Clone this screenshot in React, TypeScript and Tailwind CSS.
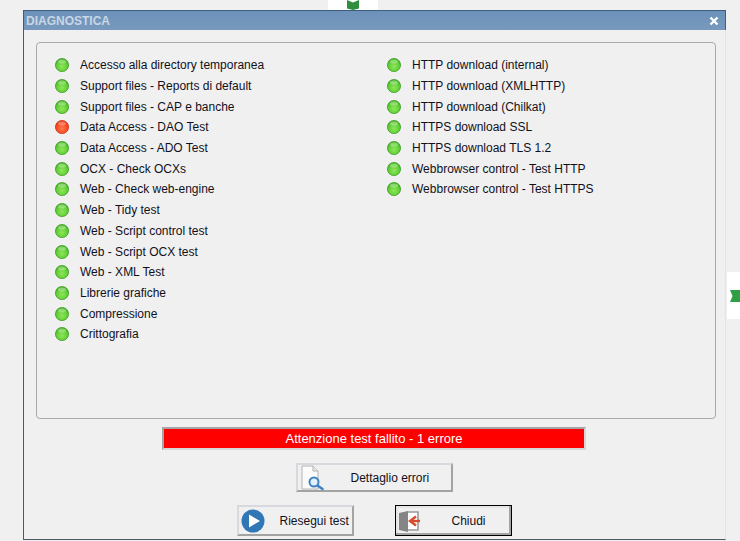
const left: [string, boolean?][] = [
  ["Accesso alla directory temporanea"],
  ["Support files - Reports di default"],
  ["Support files - CAP e banche"],
  ["Data Access - DAO Test", true],
  ["Data Access - ADO Test"],
  ["OCX - Check OCXs"],
  ["Web - Check web-engine"],
  ["Web - Tidy test"],
  ["Web - Script control test"],
  ["Web - Script OCX test"],
  ["Web - XML Test"],
  ["Librerie grafiche"],
  ["Compressione"],
  ["Crittografia"],
];
const right: [string, boolean?][] = [
  ["HTTP download (internal)"],
  ["HTTP download (XMLHTTP)"],
  ["HTTP download (Chilkat)"],
  ["HTTPS download SSL"],
  ["HTTPS download TLS 1.2"],
  ["Webbrowser control - Test HTTP"],
  ["Webbrowser control - Test HTTPS"],
];

function Led({ red }: { red?: boolean }) {
  const id = red ? "ledr" : "ledg";
  return (
    <svg width="14" height="14" viewBox="0 0 14 14" className="shrink-0">
      <defs>
        <radialGradient id={id} cx="50%" cy="62%" r="60%">
          <stop offset="0%" stopColor={red ? "#ff7a50" : "#8fe65a"} />
          <stop offset="65%" stopColor={red ? "#fb4a22" : "#62cf38"} />
          <stop offset="100%" stopColor={red ? "#e83010" : "#3fae1f"} />
        </radialGradient>
      </defs>
      <circle cx="7" cy="7" r="6.6" fill={`url(#${id})`} stroke={red ? "#c92a10" : "#3a9a1e"} strokeWidth="0.7" />
      <ellipse cx="7" cy="3.6" rx="4" ry="2" fill="#ffffff" opacity="0.3" />
    </svg>
  );
}

function Column({ items, className }: { items: [string, boolean?][]; className: string }) {
  return (
    <div className={className}>
      {items.map(([label, red]) => (
        <div key={label} className="h-[20.7px] flex items-center gap-[11px]">
          <Led red={red} />
          <span className="text-[12px] leading-none text-[#10101c] whitespace-nowrap">{label}</span>
        </div>
      ))}
    </div>
  );
}

function Btn({ icon, label, className, textClass }: { icon: React.ReactNode; label: string; className: string; textClass: string }) {
  return (
    <button className={`relative flex items-center bg-[#f0f0f0] text-[12px] text-[#10101c] ${className}`}>
      {icon}
      <span className={textClass}>{label}</span>
    </button>
  );
}

const SearchDoc = (
  <svg width="24" height="26" viewBox="0 0 24 26" className="ml-[3px] shrink-0">
    <path d="M1 1h11l5 5v18H1z" fill="#fbfbfb" stroke="#b4b4b4" />
    <path d="M12 1v5h5" fill="#e8e8e8" stroke="#b4b4b4" />
    <circle cx="13" cy="17" r="4.5" fill="#e6f0f8" stroke="#3f83c4" strokeWidth="2" />
    <path d="M16.5 20.5l5 3.5" stroke="#3f83c4" strokeWidth="2.6" strokeLinecap="round" />
  </svg>
);

const Play = (
  <svg width="24" height="24" viewBox="0 0 24 24" className="ml-[2px] shrink-0">
    <circle cx="12" cy="12" r="11.5" fill="#3277b5" />
    <path d="M8 5.5L19 12 8 18.5z" fill="#ffffff" />
  </svg>
);

const Exit = (
  <svg width="24" height="24" viewBox="0 0 24 24" className="ml-[2px] shrink-0">
    <path d="M9 3h11v18H9" fill="#ffffff" stroke="#9a9a9a" strokeWidth="1.6" />
    <path d="M1 4l9-2v21l-9-2z" fill="#858585" />
    <path d="M13 12h9" stroke="#d9492f" strokeWidth="2.4" />
    <path d="M18 7.5L12 12l6 4.5" fill="none" stroke="#d9492f" strokeWidth="2.4" />
  </svg>
);

function Notch({ rotate }: { rotate: boolean }) {
  return (
    <svg width="12" height="10" viewBox="0 0 12 10" className={rotate ? "rotate-[-90deg]" : ""}>
      <path d="M0 0l3 1.500 3 1.500 3-1.500 3-1.500v10H0z" fill="#2f9e44" transform={rotate ? "" : "rotate(180 6 5)"} />
    </svg>
  );
}

export default function App() {
  return (
    <div className="relative w-[740px] h-[541px] overflow-hidden bg-[#f0f0f0] font-['Tahoma','Liberation_Sans',sans-serif]">
      <div className="absolute left-[328px] top-0 w-[50px] h-[10px] bg-white flex justify-center items-end">
        <svg width="12" height="10" viewBox="0 0 12 10"><path d="M0 0l6 2.500L12 0v8.500L6 10 0 8.500z" fill="#2f8f3e" /></svg>
      </div>
      <div className="absolute left-[727px] top-[272px] w-[13px] h-[47px] bg-white flex items-center justify-end">
        <svg width="10" height="12" viewBox="0 0 10 12"><path d="M0 0h10v12H0l2.500-6z" fill="#2f9e44" /></svg>
      </div>

      <div className="absolute left-[23px] top-[10px] w-[703px] h-[530px] flex flex-col border-l border-b border-[#4c5a68] border-r-[#e4e4e4] border-r-1">
        <div className="h-[20px] shrink-0 -mr-px flex items-center justify-between border-t border-r border-[#3f5d7c] bg-gradient-to-b from-[#6c92ba] to-[#7899bd] pl-[2px] pr-[6px]">
          <span className="text-[12px] font-bold text-[#c9d6e4]">DIAGNOSTICA</span>
          <span className="w-[10px] h-[10px] flex items-center justify-center">
            <svg width="10" height="10" viewBox="0 0 10 10"><path d="M1.500 1.500l7 7M8.500 1.500l-7 7" stroke="#ffffff" strokeWidth="2.400" /></svg>
          </span>
        </div>

        <div className="flex-1 flex flex-col items-center">
          <div className="mt-[12px] self-start ml-[12px] w-[680px] h-[377px] border border-[#a9a9a9] rounded-[4px] flex pt-[12px]">
            <Column items={left} className="ml-[18px] w-[332px]" />
            <Column items={right} className="" />
          </div>

          <div className="mt-[8px] ml-[-1px] w-[424px] h-[23px] border-2 border-t-[#a5a5a5] border-l-[#a5a5a5] border-r-[#d6d6d6] border-b-[#d6d6d6] bg-[#ff0000] text-white text-[13px] flex items-center justify-center">
            Attenzione test fallito - 1 errore
          </div>

          <Btn
            icon={SearchDoc}
            label="Dettaglio errori"
            className="mt-[13px] ml-[-1px] w-[157px] h-[29px] border-2 border-t-[#d8d8de] border-l-[#d8d8de] border-r-[#a3a3a3] border-b-[#a3a3a3]"
            textClass="ml-[26px]"
          />

          <div className="mt-[13px] flex gap-[41px] ml-[-1px]">
            <Btn
              icon={Play}
              label="Riesegui test"
              className="w-[117px] h-[31px] border-2 border-t-[#d8d8de] border-l-[#d8d8de] border-r-[#a3a3a3] border-b-[#a3a3a3]"
              textClass="ml-[15px]"
            />
            <Btn
              icon={Exit}
              label="Chiudi"
              className="w-[117px] h-[31px] border border-black shadow-[inset_-2px_-2px_0_#a3a3a3,inset_2px_2px_0_#e4e4e4]"
              textClass="ml-[30px]"
            />
          </div>
        </div>
      </div>
    </div>
  );
}
